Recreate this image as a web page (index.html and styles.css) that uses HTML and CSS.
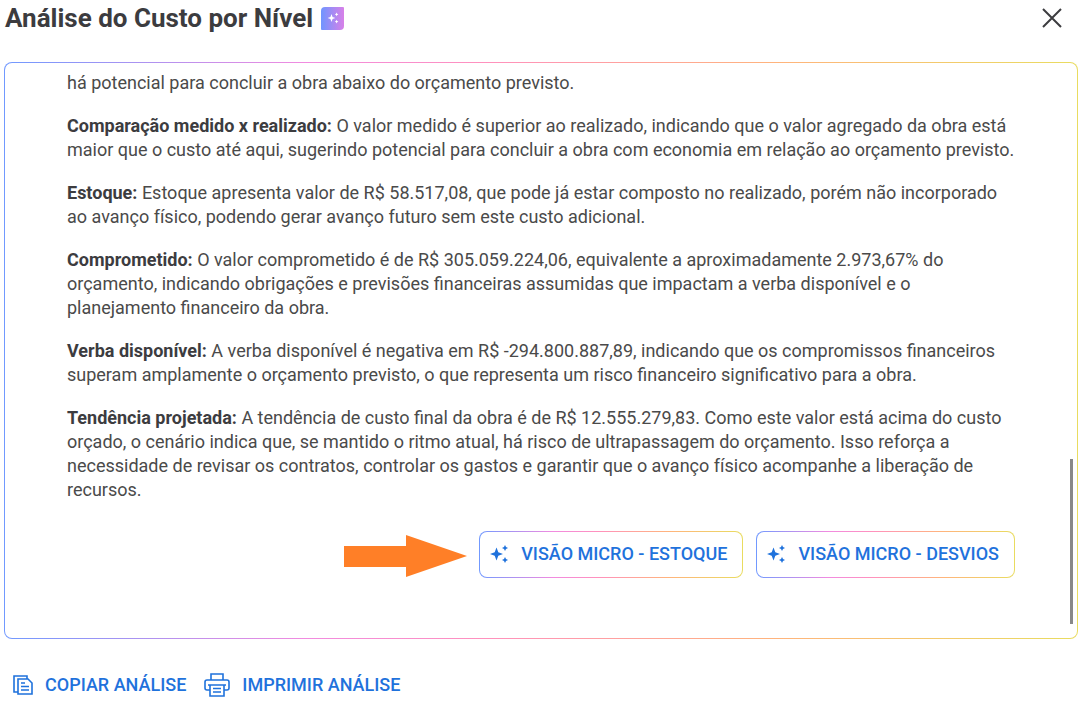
FILE: index.html
```html
<!DOCTYPE html>
<html lang="pt-BR">
<head>
<meta charset="utf-8">
<meta name="viewport" content="width=device-width, initial-scale=1">
<title>Análise do Custo por Nível</title>
<link rel="stylesheet" href="styles.css">
</head>
<body>
<svg class="defs" aria-hidden="true">
  <symbol id="sparkles" viewBox="0 0 20 20">
    <path d="M7.500 3.500L9.300 8.200L14 10L9.300 11.800L7.500 16.500L5.700 11.800L1 10L5.700 8.200Z"/>
    <path d="M16 1L17 3L19 4L17 5L16 7L15 5L13 4L15 3Z"/>
    <path d="M16 13L17 15L19 16L17 17L16 19L15 17L13 16L15 15Z"/>
  </symbol>
</svg>
<main class="dialog">
  <header class="header">
    <h1 class="title">Análise do Custo por Nível</h1>
    <span class="badge"><svg class="badge-icon"><use href="#sparkles"/></svg></span>
    <button class="close" type="button" aria-label="Fechar">
      <svg viewBox="0 0 20 20" width="20" height="20"><path d="M1 1L19 19M19 1L1 19"/></svg>
    </button>
  </header>
  <section class="panel">
    <div class="analysis">
      <p>há potencial para concluir a obra abaixo do orçamento previsto.</p>
      <p><strong>Comparação medido x realizado:</strong> O valor medido é superior ao realizado, indicando que o valor agregado da obra está maior que o custo até aqui, sugerindo potencial para concluir a obra com economia em relação ao orçamento previsto.</p>
      <p><strong>Estoque:</strong> Estoque apresenta valor de R$ 58.517,08, que pode já estar composto no realizado, porém não incorporado ao avanço físico, podendo gerar avanço futuro sem este custo adicional.</p>
      <p><strong>Comprometido:</strong> O valor comprometido é de R$ 305.059.224,06, equivalente a aproximadamente 2.973,67% do orçamento, indicando obrigações e previsões financeiras assumidas que impactam a verba disponível e o planejamento financeiro da obra.</p>
      <p><strong>Verba disponível:</strong> A verba disponível é negativa em R$ -294.800.887,89, indicando que os compromissos financeiros superam amplamente o orçamento previsto, o que representa um risco financeiro significativo para a obra.</p>
      <p><strong>Tendência projetada:</strong> A tendência de custo final da obra é de R$ 12.555.279,83. Como este valor está acima do custo orçado, o cenário indica que, se mantido o ritmo atual, há risco de ultrapassagem do orçamento. Isso reforça a necessidade de revisar os contratos, controlar os gastos e garantir que o avanço físico acompanhe a liberação de recursos.</p>
    </div>
    <div class="actions">
      <svg class="arrow" viewBox="0 0 124 48" aria-hidden="true"><path d="M0 16H62V5L123 26L62 47V37H0Z"/></svg>
      <button class="micro" type="button"><svg class="micro-icon"><use href="#sparkles"/></svg>VISÃO MICRO - ESTOQUE</button>
      <button class="micro" type="button"><svg class="micro-icon"><use href="#sparkles"/></svg>VISÃO MICRO - DESVIOS</button>
    </div>
    <span class="scroll-thumb"></span>
  </section>
  <footer class="footer">
    <button class="tool" type="button">
      <svg class="copy-icon" viewBox="0 0 20 20"><path d="M5 17H1V1H14V4M15 4H5V19H19V8L15 4ZM8 8H12M8 11.500H16M8 15H16"/></svg>COPIAR ANÁLISE</button>
    <button class="tool" type="button">
      <svg class="print-icon" viewBox="0 0 26 24"><path d="M7 7V1H19V7M6 17H3Q1 17 1 15V9Q1 7 3 7H23Q25 7 25 9V15Q25 17 23 17H20M4 12H22M6 12V23H20V12M9 15.500H17M9 19H17"/></svg>IMPRIMIR ANÁLISE</button>
  </footer>
</main>
</body>
</html>
```
FILE: styles.css
```css
* { box-sizing: border-box; }
body {
  margin: 0;
  background: #fff;
  color: #4a4a4a;
  font-family: Roboto, "Liberation Sans", sans-serif;
  font-size: 18px;
  line-height: 24px;
}
button { border: 0; padding: 0; background: none; font: inherit; cursor: pointer; }
strong { color: #3c3c3f; }
.defs { position: absolute; width: 0; height: 0; }
.dialog { padding: 0 2px 0 4px; }
.header { display: flex; align-items: center; height: 36px; }
.title { margin: 0 8px 0 1px; font-size: 26px; line-height: 36px; font-weight: 700; color: #3c3c3f; }
.badge {
  display: flex;
  align-items: center;
  justify-content: center;
  width: 23px;
  height: 23px;
  border-radius: 4px 1px 4px 1px;
  background: linear-gradient(90deg, #6f95ff, #d880e8);
}
.badge-icon { width: 12px; height: 12px; fill: #fff; }
.close { display: flex; margin: 0 16px 0 auto; }
.close svg { fill: none; stroke: #3c3c3f; stroke-width: 2; }
.panel, .micro {
  border: 1px solid transparent;
  border-radius: 8px;
  background:
    linear-gradient(#fff, #fff) padding-box,
    linear-gradient(90deg, #7199ff 0%, #f18be0 28%, #ff91bd 45%, #ffb47c 72%, #e9dc60 100%) border-box;
}
.panel { position: relative; margin-top: 26px; padding: 8px 62px 60px; }
.analysis p { margin: 0 0 19px; }
.analysis p:last-child { margin: 0; }
.actions { display: flex; align-items: center; justify-content: flex-end; gap: 13px; margin-top: 28px; }
.arrow { width: 124px; height: 48px; margin-right: -2px; fill: #ff7f27; }
.micro {
  display: flex;
  align-items: center;
  gap: 12px;
  height: 47px;
  padding: 0 15px 0 9px;
  color: #1f72dc;
  font-weight: 500;
}
.micro-icon { width: 20px; height: 20px; fill: currentColor; }
.scroll-thumb { position: absolute; right: 4px; bottom: 14px; width: 3px; height: 165px; background: #888; }
.footer { display: flex; align-items: center; gap: 18px; padding: 34px 9px 0; }
.tool { display: flex; align-items: center; gap: 12px; color: #1f72dc; font-weight: 500; }
.tool svg { fill: none; stroke: currentColor; stroke-width: 1.6; }
.copy-icon { width: 20px; height: 20px; }
.print-icon { width: 26px; height: 24px; }
```
